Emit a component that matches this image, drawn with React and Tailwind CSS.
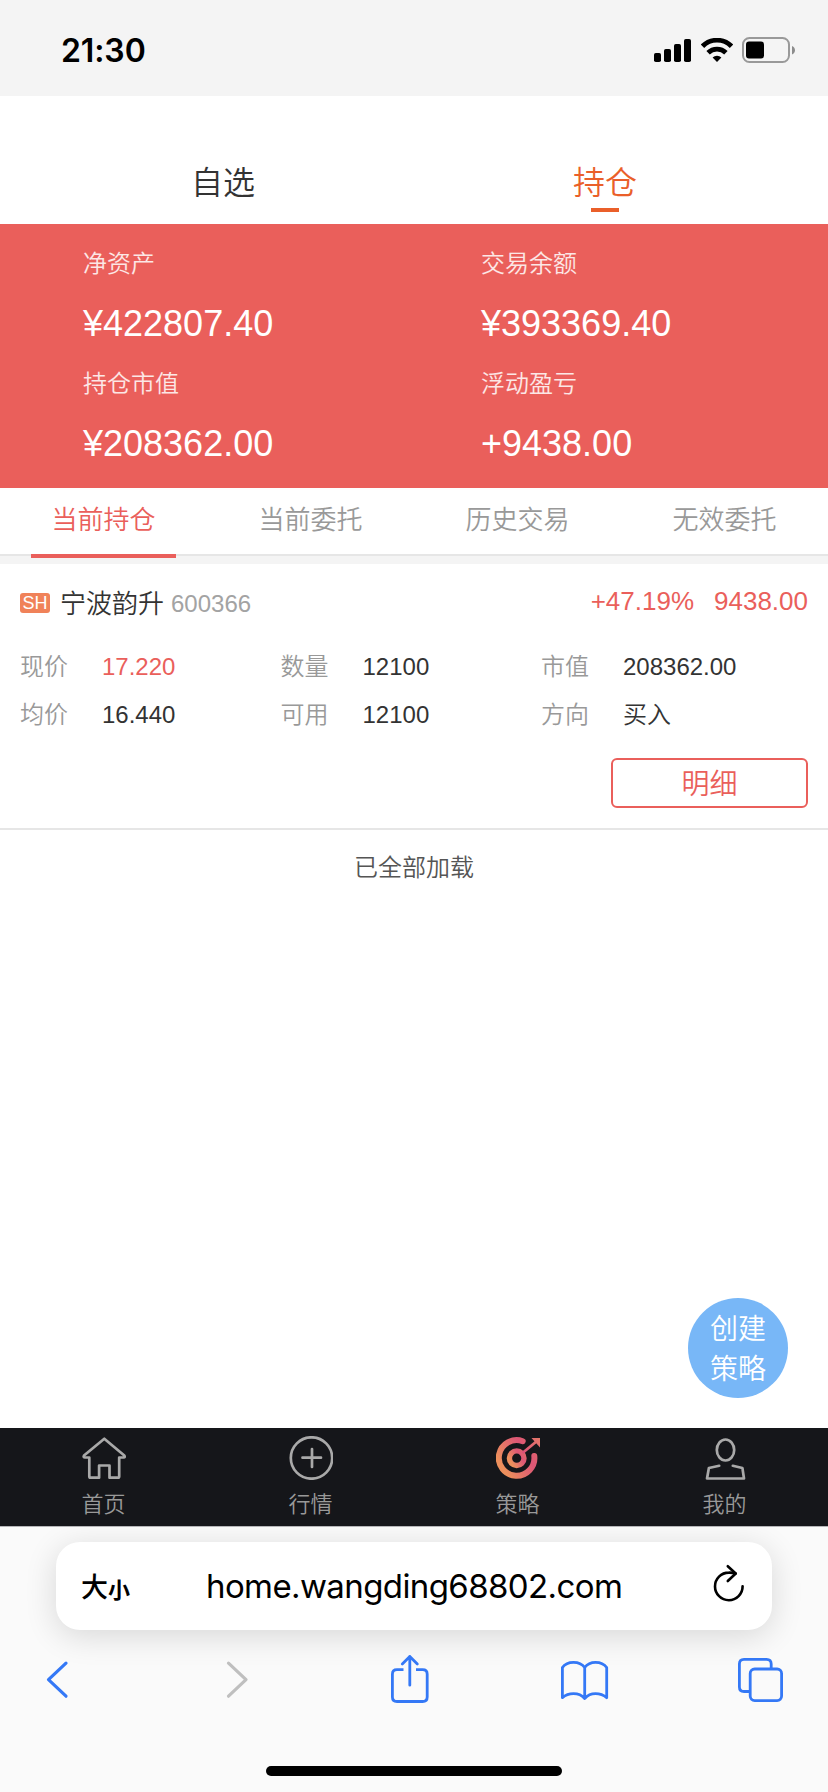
const CJK = "font-['Liberation_Sans','Noto_Sans_CJK_SC',sans-serif]";

function StatusBar() {
  return (
    <header className="flex h-24 items-center justify-between bg-[#f4f4f4] pl-[61px] pr-[33px] pt-[3px]">
      <span className="pt-0.5 font-['Inter',sans-serif] text-[32px] font-semibold leading-[40px] tracking-[-0.1px] text-black">21:30</span>
      <div className="flex items-center">
        <svg className="mr-[9px] h-6 w-[38px]" viewBox="0 0 38 24">
          <rect x="0" y="15" width="7" height="9" rx="1.8" />
          <rect x="10" y="11" width="7" height="13" rx="1.8" />
          <rect x="20" y="6" width="7" height="18" rx="1.8" />
          <rect x="30" y="1" width="7" height="23" rx="1.8" />
        </svg>
        <svg className="mr-[9px] h-6 w-8" viewBox="0 0 32 24" fill="none" stroke="#000" strokeWidth="4.8">
          <path d="M1.500 8.200a20.500 20.500 0 0 1 29 0" />
          <path d="M7.100 14.800a12.600 12.600 0 0 1 17.800 0" />
          <path d="M16 24l-4.400-4.500a6.400 6.400 0 0 1 8.800 0z" fill="#000" stroke="none" />
        </svg>
        <svg className="h-[26px] w-[53px]" viewBox="0 0 53 26">
          <rect x="1" y="1" width="46" height="24" rx="6.500" fill="none" stroke="#999" strokeWidth="2" />
          <rect x="4" y="4.500" width="18" height="17" rx="3" />
          <path d="M50 9c4 1.500 4 7 0 8.500z" fill="#8c8c8c" />
        </svg>
      </div>
    </header>
  );
}

function TopTabs() {
  return (
    <nav className="flex h-32 px-8 pt-[63px] text-[32px] leading-[49px]">
      <div className="flex flex-1 flex-col items-center text-[#333]">自选</div>
      <div className="flex flex-1 flex-col items-center text-[#ea5f2a]">
        <span className="h-[49px]">持仓</span>
        <span className="h-1 w-7 bg-[#ea5f2a]" />
      </div>
    </nav>
  );
}

function Metric({ label, value }) {
  return (
    <div className="flex h-[120px] flex-col">
      <span className="text-2xl leading-[48px] text-white/85">{label}</span>
      <span className="text-[36px] leading-[72px] text-white">{value}</span>
    </div>
  );
}

function Summary() {
  return (
    <section className="grid h-[264px] grid-cols-[398px_1fr] content-start bg-[#ea5f5b] pl-[83px] pt-4">
      <Metric label="净资产" value="¥422807.40" />
      <Metric label="交易余额" value="¥393369.40" />
      <Metric label="持仓市值" value="¥208362.00" />
      <Metric label="浮动盈亏" value="+9438.00" />
    </section>
  );
}

function SubTabs() {
  const tabs = ["当前持仓", "当前委托", "历史交易", "无效委托"];
  return (
    <nav className="grid h-[76px] grid-cols-4 bg-[linear-gradient(#fff_66px,#e6e6e6_66px,#e6e6e6_68px,#f4f4f4_68px)] text-[26px] leading-[64px]">
      {tabs.map((tab, i) => (
        <div key={tab} className={i === 0 ? "flex flex-col items-center text-[#ea5f5b]" : "flex flex-col items-center text-[#999]"}>
          <span className="h-[66px]">{tab}</span>
          {i === 0 && <span className="h-1 w-[145px] bg-[#ea5f5b]" />}
        </div>
      ))}
    </nav>
  );
}

function Field({ label, value, red }) {
  return (
    <div className="flex h-12 text-2xl leading-[50px]">
      <span className="w-[82px] text-[#999]">{label}</span>
      <span className={red ? "text-[#ea5f5b]" : "text-[#333]"}>{value}</span>
    </div>
  );
}

function Holding() {
  return (
    <article className="h-[266px] border-b-2 border-[#e6e6e6] px-5">
      <div className="flex h-[78px] items-center">
        <span className="h-5 w-[30px] rounded-[3px] bg-[#f08259] text-center text-[18px] leading-[20px] text-white">SH</span>
        <span className="ml-2.5 pt-0.5 text-[26px] text-[#333]">宁波韵升</span>
        <span className="ml-[7px] pt-0.5 text-2xl text-[#a3a3a3]">600366</span>
        <span className="ml-auto pb-[3px] text-[26px] text-[#ea5f5b]">+47.19%</span>
        <span className="ml-5 pb-[3px] text-[26px] text-[#ea5f5b]">9438.00</span>
      </div>
      <div className="grid grid-cols-[260.500px_260.500px_1fr]">
        <Field label="现价" value="17.220" red />
        <Field label="数量" value="12100" />
        <Field label="市值" value="208362.00" />
        <Field label="均价" value="16.440" />
        <Field label="可用" value="12100" />
        <Field label="方向" value="买入" />
      </div>
      <div className="mt-5 flex justify-end">
        <button className="h-[50px] w-[197px] rounded-md border-2 border-[#ea5f5b] pt-[3px] text-[28px] leading-[43px] text-[#ea5f5b]">明细</button>
      </div>
    </article>
  );
}

function NavItem({ label, children }) {
  return (
    <div className="flex flex-col items-center pt-2">
      <svg className="h-11 w-11" viewBox="0 0 44 44" fill="none" stroke="#a9a9a9" strokeWidth="2.7">{children}</svg>
      <span className="mt-[9px] text-[22px] leading-[32px] text-[#999]">{label}</span>
    </div>
  );
}

function BottomNav() {
  return (
    <nav className="grid h-[99px] grid-cols-4 border-b border-[#b5b5b8] bg-[#15161a]">
      <NavItem label="首页">
        <path strokeLinejoin="round" d="M22.300 2.700L2 19.500Q1 21.500 3 21.500H7.300V40.500Q7.300 41.700 8.500 41.700H17.100V29.500H27.500V41.700H35.800Q37.200 41.700 37.200 40.500V21.500H41.500Q43.500 21.500 42.300 19.500Z" />
      </NavItem>
      <NavItem label="行情">
        <circle cx="22.500" cy="22" r="20.700" />
        <path strokeLinecap="round" d="M13.500 21.700h18.500M23 13v18" />
      </NavItem>
      <NavItem label="策略">
        <defs>
          <linearGradient id="flame" x1="0" y1="0.8" x2="1" y2="0.2">
            <stop offset="0.1" stopColor="#ec8f5c" />
            <stop offset="0.75" stopColor="#dd5676" />
            <stop offset="1" stopColor="#e0626c" />
          </linearGradient>
          <linearGradient id="shaft" gradientUnits="userSpaceOnUse" x1="26" y1="17" x2="44" y2="3">
            <stop offset="0" stopColor="#dc4f78" />
            <stop offset="1" stopColor="#e4786a" />
          </linearGradient>
        </defs>
        <path stroke="url(#flame)" strokeWidth="6" strokeLinecap="round" d="M26.700 5.200A17.800 17.800 0 1 0 38.300 20" />
        <circle stroke="url(#flame)" strokeWidth="5.400" cx="20.700" cy="22.200" r="7.300" />
        <path stroke="url(#shaft)" strokeWidth="2.800" d="M26.500 17L41 5" />
        <path fill="url(#shaft)" stroke="none" d="M35.500 2H44V11.500Z" />
      </NavItem>
      <NavItem label="我的">
        <ellipse cx="22.500" cy="14" rx="8.700" ry="10.500" />
        <path strokeLinecap="round" strokeLinejoin="round" d="M16.200 29.800L5.900 32L4 42.500H41L39.400 32L29.800 29.800" />
      </NavItem>
    </nav>
  );
}

function BrowserBar() {
  return (
    <footer className="flex h-[265px] flex-col overflow-hidden bg-[#fafafa] pt-[15px]">
      <div className="mx-14 flex h-[88px] shrink-0 items-center rounded-[24px] bg-white text-black shadow-[0_6px_32px_rgba(0,0,0,0.14)]">
        <div className="flex w-[150px] items-baseline pl-[25px] font-['Noto_Sans_CJK_SC',sans-serif]">
          <span className="text-[27px] font-medium">大</span>
          <span className="translate-y-px text-[22px] font-bold">小</span>
        </div>
        <span className="flex-1 whitespace-nowrap pt-0.5 font-['Inter',sans-serif] text-[33px] font-normal tracking-[-0.6px]">home.wangding68802.com</span>
        <svg className="mr-6 h-11 w-9" viewBox="711 1565 36 44" fill="none" stroke="#000" strokeWidth="2.600" strokeLinecap="round" strokeLinejoin="round">
          <path d="M741.600 1587.300A13.800 13.800 0 1 1 727.800 1573.600Q731.500 1573.500 734.500 1574.500" />
          <path d="M726.800 1567.200L734.700 1574.500L726.800 1582" />
        </svg>
      </div>
      <div className="mt-5 flex h-[60px] shrink-0 text-[#3478f6]">
        <svg className="ml-[45px] h-[60px] w-[25px]" viewBox="45 1650 25 60" fill="none" stroke="currentColor" strokeWidth="3.200" strokeLinecap="round" strokeLinejoin="round">
          <path d="M66 1663.200L48.500 1679.700L66 1696.200" />
        </svg>
        <svg className="ml-[155px] h-[60px] w-[25px] text-[#bfbfbf]" viewBox="225 1650 25 60" fill="none" stroke="currentColor" strokeWidth="3.200" strokeLinecap="round" strokeLinejoin="round">
          <path d="M228.500 1663.200L246 1679.700L228.500 1696.200" />
        </svg>
        <svg className="ml-[139px] h-[60px] w-[42px]" viewBox="389 1650 42 60" fill="none" stroke="currentColor" strokeWidth="2.800" strokeLinecap="round" strokeLinejoin="round">
          <path strokeLinecap="butt" d="M403.500 1669.700H397Q392.400 1669.700 392.400 1674.200V1697Q392.400 1701.500 397 1701.500H422.600Q427.200 1701.500 427.200 1697V1674.200Q427.200 1669.700 422.600 1669.700H416" />
          <path d="M409.800 1685.200V1656.500M402.300 1664L409.800 1656.500L417.300 1664" />
        </svg>
        <svg className="ml-[128px] h-[60px] w-[51px]" viewBox="559 1650 51 60" fill="none" stroke="currentColor" strokeWidth="2.800" strokeLinecap="round" strokeLinejoin="round">
          <path d="M584.700 1667.500Q581 1662.300 573.500 1662.300Q566 1662.300 562.400 1667.500V1697.700Q567 1693.600 573.500 1693.600Q580.500 1693.600 584.700 1698.500Q589 1693.600 595.500 1693.600Q602 1693.600 606.700 1697.700V1667.500Q603 1662.300 595.500 1662.300Q588.500 1662.300 584.700 1667.500ZV1698" />
        </svg>
        <svg className="ml-[126px] h-[60px] w-[49px]" viewBox="736 1650 49 60" fill="none" stroke="currentColor" strokeWidth="2.800">
          <rect x="750.200" y="1669" width="31.400" height="31.600" rx="4.500" />
          <path d="M750 1691.500H744Q739.400 1691.500 739.400 1687V1664Q739.400 1659.400 744 1659.400H766.500Q771.200 1659.400 771.200 1664V1668.500" />
        </svg>
      </div>
      <div className="mx-auto mt-14 h-2.5 w-[296px] shrink-0 rounded-full bg-black" />
    </footer>
  );
}

export default function App() {
  return (
    <div className={`${CJK} flex h-[1792px] w-[828px] flex-col overflow-hidden bg-white font-[350]`}>
      <StatusBar />
      <TopTabs />
      <Summary />
      <SubTabs />
      <Holding />
      <main className="flex flex-1 flex-col justify-between">
        <p className="pt-[14px] text-center text-2xl leading-[48px] text-[#555]">已全部加载</p>
        <button className="mb-[30px] mr-10 flex size-[100px] flex-col items-center justify-center self-end rounded-full bg-[#78b7f7] pt-[3px] text-[28px] leading-[40px] text-white">
          <span>创建</span>
          <span>策略</span>
        </button>
      </main>
      <BottomNav />
      <BrowserBar />
    </div>
  );
}
